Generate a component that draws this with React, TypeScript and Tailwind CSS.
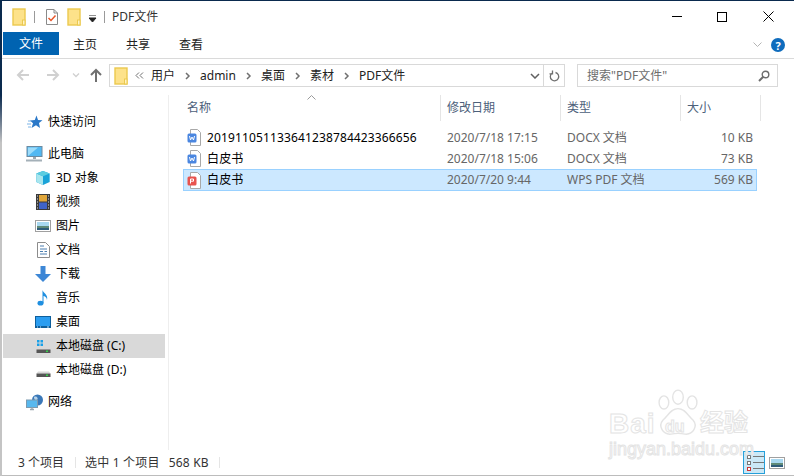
import React from 'react';

const font = { sans: "font-['Noto_Sans','Noto_Sans_CJK_SC',sans-serif]" };

const FolderIcon = () => (
  <svg width="14" height="18" viewBox="0 0 14 18">
    <rect x="1" y="1" width="12" height="16" fill="#fde28a" stroke="#ebc94f" strokeWidth="1.4" />
    <rect x="10.5" y="12" width="2.5" height="5" fill="#fff3c4" stroke="#ebc94f" />
  </svg>
);

const CheckDocIcon = () => (
  <svg width="14" height="18" viewBox="0 0 14 18">
    <path d="M1.5 1.5H9L12.5 5V16.5H1.5Z" fill="#fff" stroke="#8a8a8a" />
    <path d="M9 1.5V5H12.5" fill="none" stroke="#8a8a8a" />
    <path d="M3.5 10L6 12.5L10.5 7.5" fill="none" stroke="#e8562a" strokeWidth="1.5" />
  </svg>
);

const Arrow = ({ dir, color }: { dir: 'left' | 'right' | 'up'; color: string }) => {
  const d = dir === 'left' ? 'M13 7H2M7 2L2 7L7 12' : dir === 'right' ? 'M1 7H12M7 2L12 7L7 12' : 'M7 14V2M2 7L7 2L12 7';
  return (
    <svg width="14" height="14" viewBox="0 0 14 14">
      <path d={d} fill="none" stroke={color} strokeWidth="2" />
    </svg>
  );
};

const Crumb = () => (
  <svg width="6" height="8" viewBox="0 0 6 8" className="ml-[10px] mr-[9px]">
    <path d="M1 1L4 4L1 7" fill="none" stroke="#707070" strokeWidth="1.5" />
  </svg>
);

const SideIcon = ({ name }: { name: string }) => {
  switch (name) {
    case 'star':
      return (
        <svg width="16" height="14" viewBox="0 0 16 14">
          <path d="M9.5 0.5L11 5L15.5 5.2L12 8L13 13L9 10.3L4.5 13L6 8.2L3 5.5L7.8 5Z" fill="#2a78c8" />
          <path d="M1 6H4M0 9H4M1 12H4" stroke="#7db4e6" />
        </svg>
      );
    case 'pc':
      return (
        <svg width="18" height="16" viewBox="0 0 18 16">
          <rect x="1" y="0.5" width="15" height="10" fill="#52b8f2" stroke="#6c8aa0" />
          <path d="M2 10L12 1.5H2Z" fill="#9ddcfa" />
          <rect x="7" y="11" width="3" height="2" fill="#9aa7b0" />
          <rect x="0" y="13.5" width="16" height="2" fill="#a4b0b8" />
        </svg>
      );
    case 'cube':
      return (
        <svg width="16" height="16" viewBox="0 0 18 16">
          <path d="M9 0L16.5 3V12.5L9 16L1.5 12.5V3Z" fill="#19a3d8" />
          <path d="M1.5 3L9 6V16L1.5 12.5Z" fill="#a8e6ee" />
          <path d="M9 0L16.5 3L9 6L1.5 3Z" fill="#5ccde0" />
        </svg>
      );
    case 'film':
      return (
        <svg width="14" height="16" viewBox="0 0 14 16">
          <rect width="14" height="16" fill="#3a3a3a" />
          <rect x="3" y="1" width="8" height="6.5" fill="#e0a63a" />
          <rect x="3" y="8.5" width="8" height="6.5" fill="#3f63c8" />
          <path d="M1 2H2M1 5H2M1 8H2M1 11H2M1 14H2M12 2H13M12 5H13M12 8H13M12 11H13M12 14H13" stroke="#ddd" />
        </svg>
      );
    case 'pic':
      return (
        <svg width="16" height="12" viewBox="0 0 16 12">
          <rect x="0.5" y="0.5" width="15" height="11" fill="#fff" stroke="#a0a0a0" />
          <rect x="2" y="2" width="12" height="4" fill="#a8d8f0" />
          <rect x="2" y="6" width="12" height="2" fill="#5f8a78" />
          <rect x="2" y="8" width="12" height="2" fill="#2f5c7a" />
        </svg>
      );
    case 'doc':
      return (
        <svg width="13" height="16" viewBox="0 0 13 16">
          <path d="M0.5 0.5H8.5L12.5 4.5V15.5H0.5Z" fill="#fff" stroke="#8c8c8c" />
          <path d="M3 4H7M3 7H10M3 9.5H6M7.5 9.5H10M3 12H10" stroke="#4c7fb0" />
        </svg>
      );
    case 'down':
      return (
        <svg width="16" height="16" viewBox="0 0 16 16">
          <path d="M5.5 0H10.5V8H16L8 16L0 8H5.5Z" fill="#3d87d6" />
        </svg>
      );
    case 'music':
      return (
        <svg width="12" height="16" viewBox="0 0 12 16">
          <ellipse cx="3.5" cy="13.2" rx="3" ry="2.4" fill="#1f8fe0" />
          <path d="M5.5 13V0C6 3 11.5 4.5 10 10C9.8 7 7.5 6 6.5 6V13Z" fill="#1f8fe0" />
        </svg>
      );
    case 'desk':
      return (
        <svg width="16" height="12" viewBox="0 0 16 12">
          <rect width="16" height="12" fill="#0e5f9c" />
          <rect x="1" y="1" width="14" height="9" fill="#2b9df0" />
          <path d="M2 11H3M5 11H6M12 11H14" stroke="#bfe3f8" />
        </svg>
      );
    case 'drivec':
    case 'drived':
      return (
        <svg width="15" height="14" viewBox="0 0 15 14">
          {name === 'drivec' && <path d="M1 1H3.5V3.5H1ZM4.5 1H7V3.5H4.5ZM1 4.5H3.5V7H1ZM4.5 4.5H7V7H4.5Z" fill="#18a0e8" />}
          <path d="M2 8.5H13L14.5 10.5H0.5Z" fill="#d8d8d8" />
          <rect x="0.5" y="10.5" width="14" height="3.5" fill="#555" />
          <rect x="10" y="11.5" width="2" height="1.5" fill="#35d04a" />
        </svg>
      );
    default:
      return (
        <svg width="18" height="17" viewBox="0 0 18 17">
          <circle cx="11.5" cy="6" r="5.5" fill="#3a78b8" />
          <path d="M8 3C10 1.5 13 4 11 6C9 7 8 5 8 3Z" fill="#b6d3ea" />
          <rect x="0.5" y="6" width="11" height="7.5" fill="#58b8ee" stroke="#7a9ab0" />
          <path d="M4 15.5H8M6 13.5V15.5" stroke="#9aa7b0" strokeWidth="1.4" />
        </svg>
      );
  }
};

const FileIcon = ({ kind }: { kind: 'w' | 'p' }) => {
  const color = kind === 'w' ? '#4a86e0' : '#e8534e';
  return (
    <svg width="15" height="17" viewBox="0 0 15 17">
      <path d="M3.5 0.5H10.5L13.5 3.5V16.5H3.5Z" fill="#fff" stroke="#a8a8a8" />
      <rect x="0.5" y="4.5" width="9" height="9" rx="1.5" fill={color} />
      {kind === 'w' ? (
        <path d="M2.5 7L3.5 11L5 8L6.5 11L7.5 7" fill="none" stroke="#fff" />
      ) : (
        <path d="M3.5 11.5V7H6.5V9.2H3.5" fill="none" stroke="#fff" />
      )}
    </svg>
  );
};

const SideRow = ({ icon, label, nested, active }: { icon: string; label: string; nested?: boolean; active?: boolean }) => (
  <div className={`flex h-6 items-center text-[12px] text-black ${nested ? 'pl-[31px]' : 'pl-[23px]'} ${active ? 'bg-[#d9d9d9]' : ''}`}>
    <span className="mr-[4px] flex w-[18px] items-center justify-center">
      <SideIcon name={icon} />
    </span>
    <span>{label}</span>
  </div>
);

const files = [
  { kind: 'w' as const, name: '201911051133641238784423366656', date: '2020/7/18 17:15', type: 'DOCX 文档', size: '10 KB' },
  { kind: 'w' as const, name: '白皮书', date: '2020/7/18 15:06', type: 'DOCX 文档', size: '73 KB' },
  { kind: 'p' as const, name: '白皮书', date: '2020/7/20 9:44', type: 'WPS PDF 文档', size: '569 KB', selected: true },
];

export default function App() {
  return (
    <div className={`relative flex h-[476px] w-[794px] overflow-hidden bg-white ${font.sans} text-[12px] leading-none`}>
      {/* window edge */}
      <div className="w-[2px] shrink-0 bg-linear-to-b from-[#0a2a4e] from-20% to-[#c4c4c4] to-30%" />
      <div className="flex min-w-0 flex-1 flex-col">
        <div className="h-[1px] shrink-0 bg-[#0a2a4e]" />
        {/* title bar */}
        <div className="flex h-[31px] shrink-0 items-center pl-[10px]">
          <FolderIcon />
          <span className="ml-[8px] h-[12px] w-[1px] bg-[#9a9a9a]" />
          <span className="ml-[10px]"><CheckDocIcon /></span>
          <span className="ml-[8px]"><FolderIcon /></span>
          <svg width="8" height="8" viewBox="0 0 8 8" className="ml-[8px] mt-[5px]">
            <path d="M0 0H7M0 3H7L3.5 7Z" stroke="#222" fill="#222" />
          </svg>
          <span className="ml-[7px] h-[12px] w-[1px] bg-[#9a9a9a]" />
          <span className="ml-[7px] text-[#333]">PDF文件</span>
          <div className="ml-auto flex items-center pr-[20px]">
            <span className="mr-[35px] h-[1px] w-[10px] bg-black" />
            <span className="mr-[36px] h-[10px] w-[10px] border border-black" />
            <svg width="11" height="11" viewBox="0 0 11 11"><path d="M0.5 0.5L10.5 10.5M10.5 0.5L0.5 10.5" stroke="#000" /></svg>
          </div>
        </div>
        {/* ribbon tabs */}
        <div className="box-content flex h-[26px] shrink-0 items-start border-b border-[#dadada] pr-[6px]">
          <span className="ml-[1px] flex h-[23px] w-[56px] items-center justify-center bg-[#0063b1] pt-px text-white">文件</span>
          <span className="ml-[14px] flex h-[23px] items-center pt-[2px] text-[#222]">主页</span>
          <span className="ml-[29px] flex h-[23px] items-center pt-[2px] text-[#222]">共享</span>
          <span className="ml-[29px] flex h-[23px] items-center pt-[2px] text-[#222]">查看</span>
          <div className="ml-auto mt-[6px] flex items-center pr-[3px]">
            <svg width="9" height="6" viewBox="0 0 9 6" className="mr-[9px]"><path d="M0.5 0.5L4.5 4.5L8.5 0.5" fill="none" stroke="#b4b4b4" /></svg>
            <span className="flex h-[14px] w-[14px] items-center justify-center rounded-full bg-[#0f6cbd] text-[11px] font-bold text-white">?</span>
          </div>
        </div>
        {/* nav row */}
        <div className="flex h-[36px] shrink-0 items-start pt-[5px]">
          <span className="ml-[14px] mt-[4px]"><Arrow dir="left" color="#d0d0d0" /></span>
          <span className="ml-[16px] mt-[4px]"><Arrow dir="right" color="#d0d0d0" /></span>
          <svg width="8" height="5" viewBox="0 0 8 5" className="ml-[12px] mt-[9px]"><path d="M1 0.5L4 3.5L7 0.5" fill="none" stroke="#d0d0d0" strokeWidth="1.3" /></svg>
          <span className="ml-[9px] mt-[4px]"><Arrow dir="up" color="#707070" /></span>
          <div className="ml-[6px] flex h-[23px] w-[456px] items-center border border-[#d9d9d9] pl-[4px] text-[#222]">
            <FolderIcon />
            <svg width="9" height="7" viewBox="0 0 9 7" className="ml-[7px] mr-[7px]"><path d="M4 0.5L1 3.5L4 6.5M8 0.5L5 3.5L8 6.5" fill="none" stroke="#707070" /></svg>
            <span>用户</span>
            <Crumb />
            <span>admin</span>
            <Crumb />
            <span>桌面</span>
            <Crumb />
            <span>素材</span>
            <Crumb />
            <span>PDF文件</span>
            <svg width="10" height="6" viewBox="0 0 10 6" className="ml-auto"><path d="M1 1L5 5L9 1" fill="none" stroke="#606060" strokeWidth="1.5" /></svg>
            <span className="ml-[3px] mr-[5px] h-[21px] w-[1px] bg-[#d9d9d9]" />
            <svg width="11" height="12" viewBox="0 0 11 12" className="mr-[4px]"><path d="M6.5 2.5A4.2 4.2 0 1 1 3 3.2M3.5 0.5V3.8H0.5" fill="none" stroke="#707070" strokeWidth="1.3" /></svg>
          </div>
          <div className="ml-[12px] flex h-[23px] w-[201px] items-center border border-[#d9d9d9] pl-[9px] pr-[7px] text-[#6d6d6d]">
            <span>搜索"PDF文件"</span>
            <svg width="12" height="12" viewBox="0 0 12 12" className="ml-auto"><circle cx="7.5" cy="4.5" r="3.3" fill="none" stroke="#6d6d6d" strokeWidth="1.4" /><path d="M5 7L1 11" stroke="#6d6d6d" strokeWidth="2" /></svg>
          </div>
        </div>
        {/* body */}
        <div className="flex min-h-0 flex-1">
          <div className="box-content flex w-[166px] shrink-0 flex-col border-r border-[#eeeeee] pt-[15px]">
            <div className="w-[163px] pl-[1px]">
              <SideRow icon="star" label="快速访问" />
              <div className="h-2" />
              <SideRow icon="pc" label="此电脑" />
              <SideRow icon="cube" label="3D 对象" nested />
              <SideRow icon="film" label="视频" nested />
              <SideRow icon="pic" label="图片" nested />
              <SideRow icon="doc" label="文档" nested />
              <SideRow icon="down" label="下载" nested />
              <SideRow icon="music" label="音乐" nested />
              <SideRow icon="desk" label="桌面" nested />
              <SideRow icon="drivec" label="本地磁盘 (C:)" nested active />
              <SideRow icon="drived" label="本地磁盘 (D:)" nested />
              <div className="h-2" />
              <SideRow icon="net" label="网络" />
            </div>
          </div>
          <div className="min-w-0 flex-1 pl-[15px]">
            {/* column header */}
            <div className="relative grid h-[26px] grid-cols-[257px_120px_120px_80px] text-[#4c607a]">
              <svg width="9" height="5" viewBox="0 0 9 5" className="absolute left-[123px] top-[0px]"><path d="M0.5 4.5L4.5 0.5L8.5 4.5" fill="none" stroke="#9a9a9a" /></svg>
              <span className="flex items-center border-r border-[#e5e5e5] pl-[3px]">名称</span>
              <span className="flex items-center border-r border-[#e5e5e5] pl-[6px]">修改日期</span>
              <span className="flex items-center border-r border-[#e5e5e5] pl-[6px]">类型</span>
              <span className="flex items-center border-r border-[#e5e5e5] pl-[6px]">大小</span>
            </div>
            <div className="-ml-px mt-[6px] w-[574px]">
              {files.map((f, i) => (
                <div
                  key={i}
                  className={`grid grid-cols-[257px_120px_120px_75px] items-center border text-[#666] ${f.selected ? 'h-[22px] border-[#99d1ff] bg-[#cce8ff]' : 'h-[21px] border-transparent'}`}
                >
                  <span className="flex items-center pl-[3px] text-black">
                    <FileIcon kind={f.kind} />
                    <span className="ml-[5px] tracking-[0.13px]">{f.name}</span>
                  </span>
                  <span className="pl-[6px]">{f.date}</span>
                  <span className="pl-[6px]">{f.type}</span>
                  <span className="pr-[3px] text-right">{f.size}</span>
                </div>
              ))}
            </div>
          </div>
        </div>
        {/* status bar */}
        <div className="flex h-[25px] shrink-0 items-center text-[#333]">
          <span className="ml-[16px] mt-px">3 个项目</span>
          <span className="ml-[11px] h-[11px] w-[1px] bg-[#e5e5e5]" />
          <span className="ml-[9px] mt-px tracking-[0.2px]">选中 1 个项目</span>
          <span className="ml-[9px] mt-px tracking-[0.2px]">568 KB</span>
          <span className="ml-[10px] h-[11px] w-[1px] bg-[#e5e5e5]" />
          <div className="ml-auto mr-[9px] flex items-center">
            <span className="flex h-[23px] w-[22px] flex-col justify-center gap-[2px] border border-[#26a0da] bg-[#cbe8f6] pl-[3px]">
              <span className="flex items-center gap-[2px]"><span className="h-[4px] w-[4px] border border-[#777] bg-white" /><span className="h-[1px] w-[11px] bg-[#777]" /></span>
              <span className="flex items-center gap-[2px]"><span className="h-[4px] w-[4px] border border-[#777] bg-white" /><span className="h-[1px] w-[11px] bg-[#777]" /></span>
              <span className="flex items-center gap-[2px]"><span className="h-[4px] w-[4px] border border-[#c33] bg-white" /><span className="h-[1px] w-[11px] bg-[#777]" /></span>
            </span>
            <span className="ml-[4px]"><SideIcon name="pic" /></span>
          </div>
        </div>
        <div className="h-[1px] shrink-0 bg-[#bcbcbc]" />
      </div>
      {/* watermark */}
      <div className="pointer-events-none absolute left-[607px] top-[388px] h-[72px] w-[145px] font-['Liberation_Sans',sans-serif] text-white [-webkit-text-stroke:1px_#e4e4e4]">
        <svg width="44" height="48" viewBox="0 0 50 54" className="absolute left-[49px] top-[1px]">
          <g fill="#fff" stroke="#e4e4e4" strokeWidth="1.6">
            <ellipse cx="25" cy="9" rx="6" ry="8" />
            <ellipse cx="9" cy="15" rx="5.5" ry="7.5" />
            <ellipse cx="41" cy="15" rx="5.5" ry="7.5" />
            <path d="M25 22C33 22 36 30 42 35C48 42 42 52 33 51C28 50 22 50 17 51C8 52 2 42 8 35C14 30 17 22 25 22Z" />
          </g>
        </svg>
        <span className="absolute left-[2px] top-[22px] text-[28px] font-bold leading-none tracking-[1px]">Bai</span>
        <span className="absolute left-[58px] top-[31px] text-[16px] font-bold leading-none">du</span>
        <span className="absolute left-[93px] top-[21px] font-['Noto_Sans_CJK_SC',sans-serif] text-[24px] font-bold leading-none">经验</span>
        <span className="absolute left-[2px] top-[52px] text-[18px] leading-none">jingyan.baidu.com</span>
      </div>
    </div>
  );
}
